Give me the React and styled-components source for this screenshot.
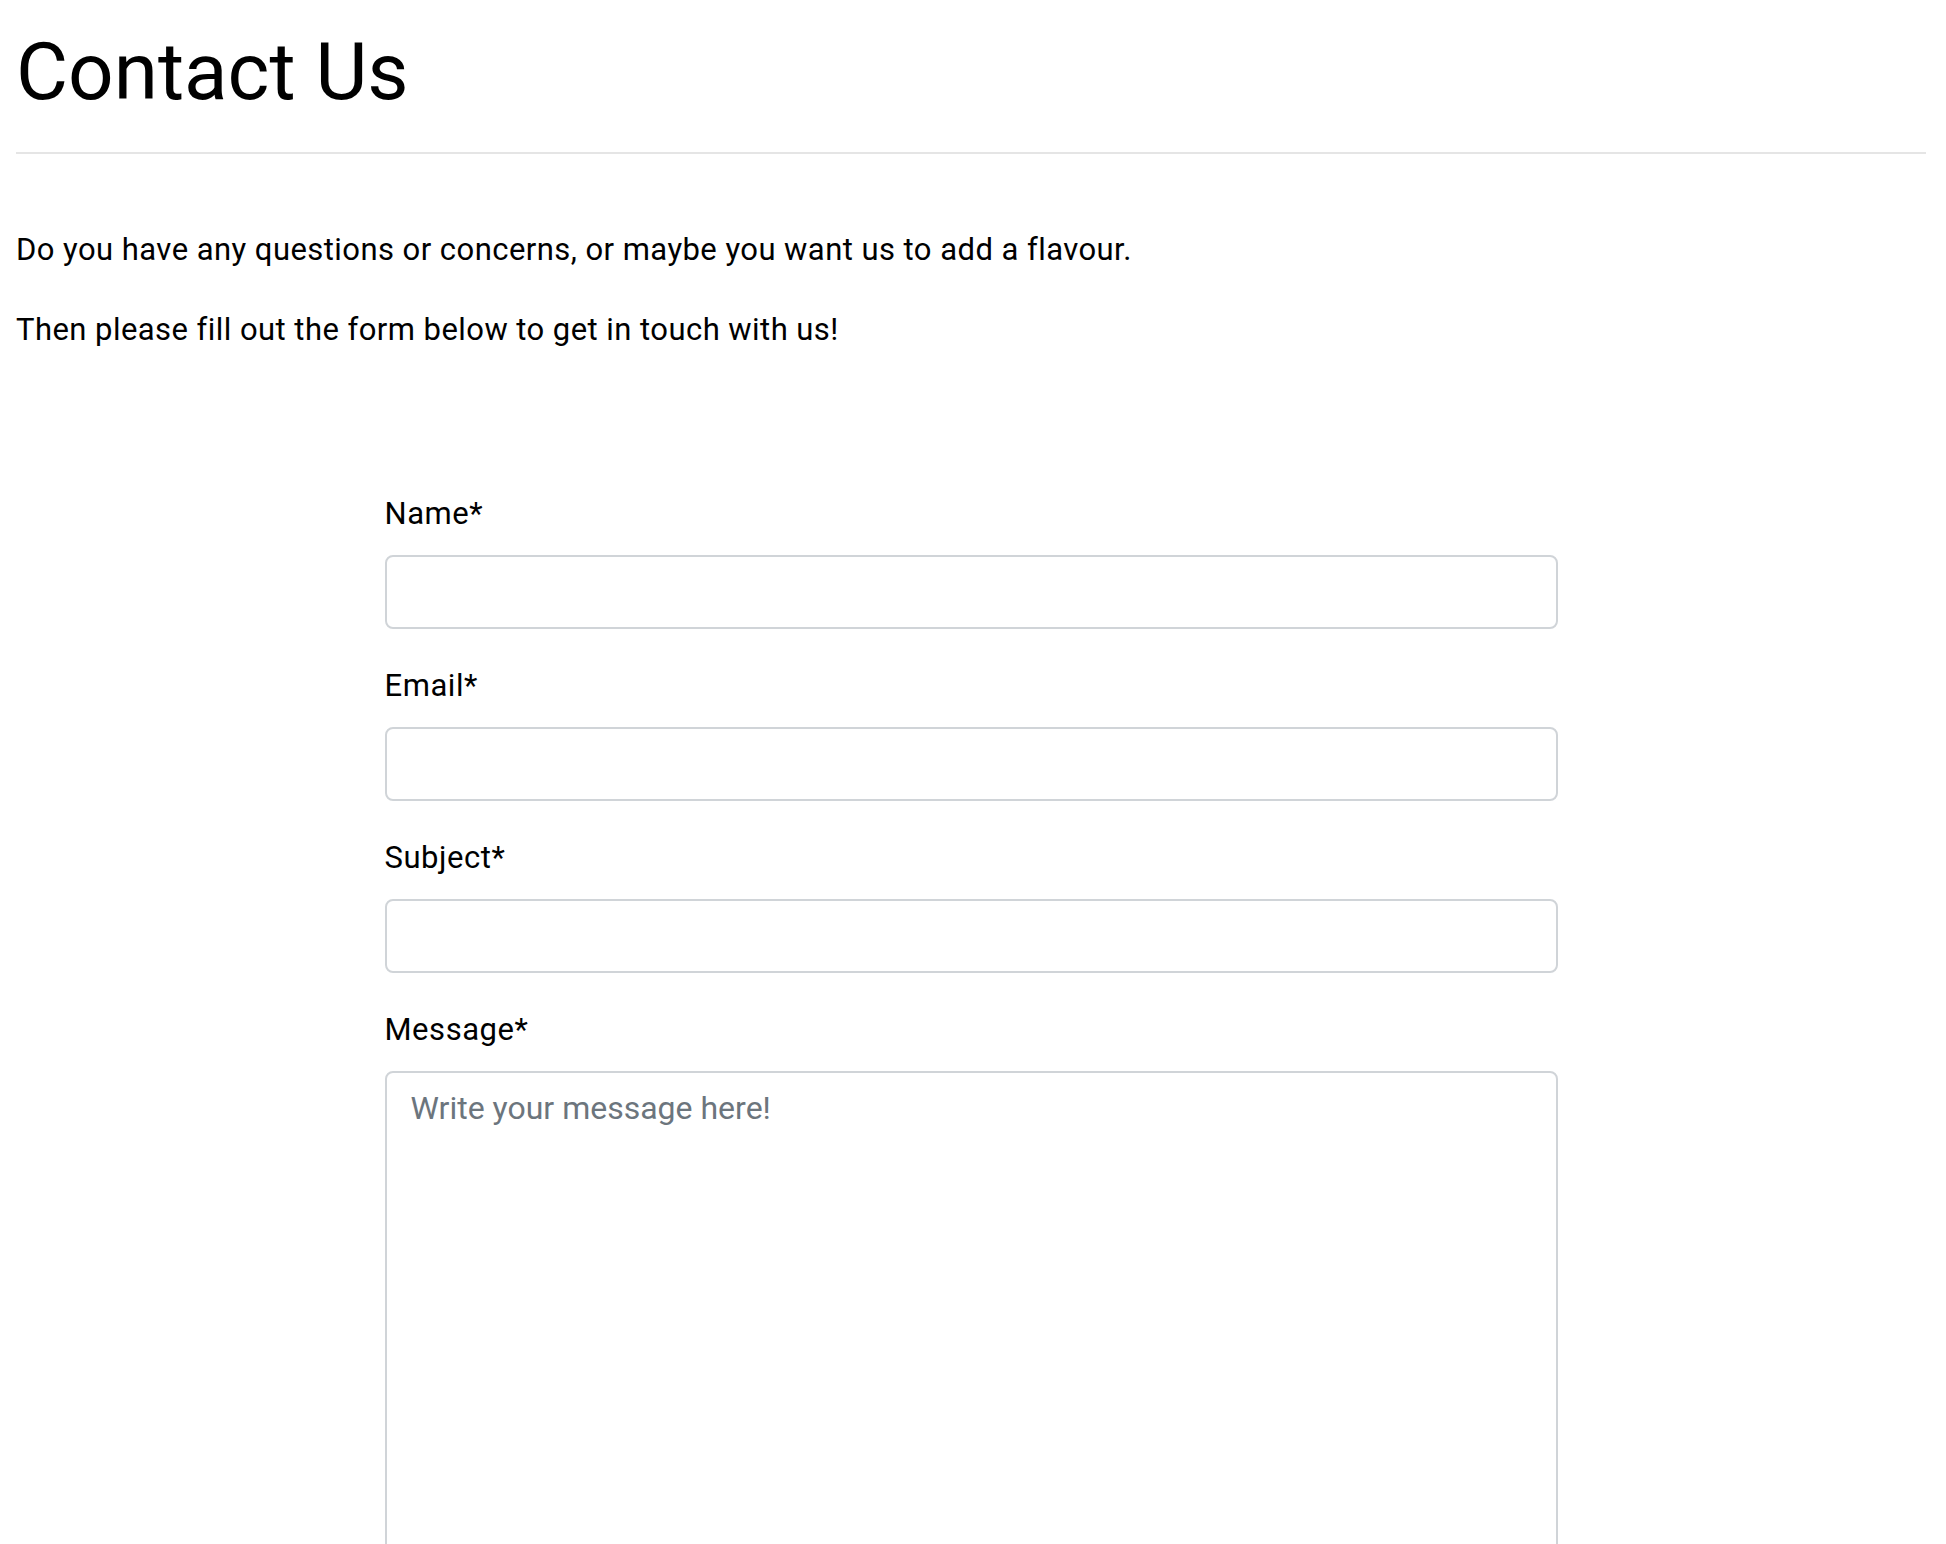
import React from 'react'
import styled, { createGlobalStyle } from 'styled-components'

const GlobalStyle = createGlobalStyle`
    html, body {
        margin: 0;
        padding: 0;
        background: #ffffff;
    }
    body {
        font-family: Roboto, "Liberation Sans", Arial, sans-serif;
        color: #000000;
    }
    * {
        box-sizing: border-box;
    }
`;

const Page = styled.main`
    padding: 0 20px 0 16px;
`;

const Title = styled.h1`
    margin: 24px 0 32px 0;
    font-size: 80px;
    font-weight: 400;
    line-height: 1.2;
`;

const Divider = styled.hr`
    margin: 0;
    border: none;
    border-top: 2px solid #e5e5e5;
`;

const Intro = styled.section`
    padding-top: 75px;
`;

const Text = styled.p`
    margin: 0 0 38px 0;
    font-size: 31px;
    line-height: 42px;
    letter-spacing: 0.45px;
`;

const Form = styled.form`
    width: 1173px;
    margin: 142px auto 0 auto;
`;

const Group = styled.div`
    display: flex;
    flex-direction: column;
    margin-bottom: 36px;
`;

const Label = styled.label`
    font-size: 31px;
    line-height: 42px;
    letter-spacing: 0.55px;
    margin-bottom: 20px;
`;

const Input = styled.input`
    width: 100%;
    height: 74px;
    border: 2px solid #d0d4d8;
    border-radius: 8px;
    padding: 6px 24px;
    font-family: inherit;
    font-size: 32px;
    background: #ffffff;
    outline: none;
`;

const TextArea = styled.textarea`
    width: 100%;
    height: 520px;
    border: 2px solid #d0d4d8;
    border-radius: 8px;
    padding: 16px 24px;
    font-family: inherit;
    font-size: 32px;
    line-height: 1.2;
    resize: vertical;
    outline: none;
    &::placeholder {
        color: #6c757d;
    }
`;

const fields = [
    { id: 'name', label: 'Name*', type: 'text' },
    { id: 'email', label: 'Email*', type: 'email' },
    { id: 'subject', label: 'Subject*', type: 'text' },
]

export default function App(){
    return(
        <>
        <GlobalStyle />
        <Page>
            <Title>Contact Us</Title>
            <Divider />
            <Intro>
                <Text>Do you have any questions or concerns, or maybe you want us to add a flavour.</Text>
                <Text>Then please fill out the form below to get in touch with us!</Text>
            </Intro>
            <Form onSubmit={e => e.preventDefault()}>
                {fields.map(f => (
                    <Group key={f.id}>
                        <Label htmlFor={f.id}>{f.label}</Label>
                        <Input id={f.id} type={f.type} />
                    </Group>
                ))}
                <Group>
                    <Label htmlFor="message">Message*</Label>
                    <TextArea id="message" placeholder="Write your message here!" />
                </Group>
            </Form>
        </Page>
        </>
    )
}
